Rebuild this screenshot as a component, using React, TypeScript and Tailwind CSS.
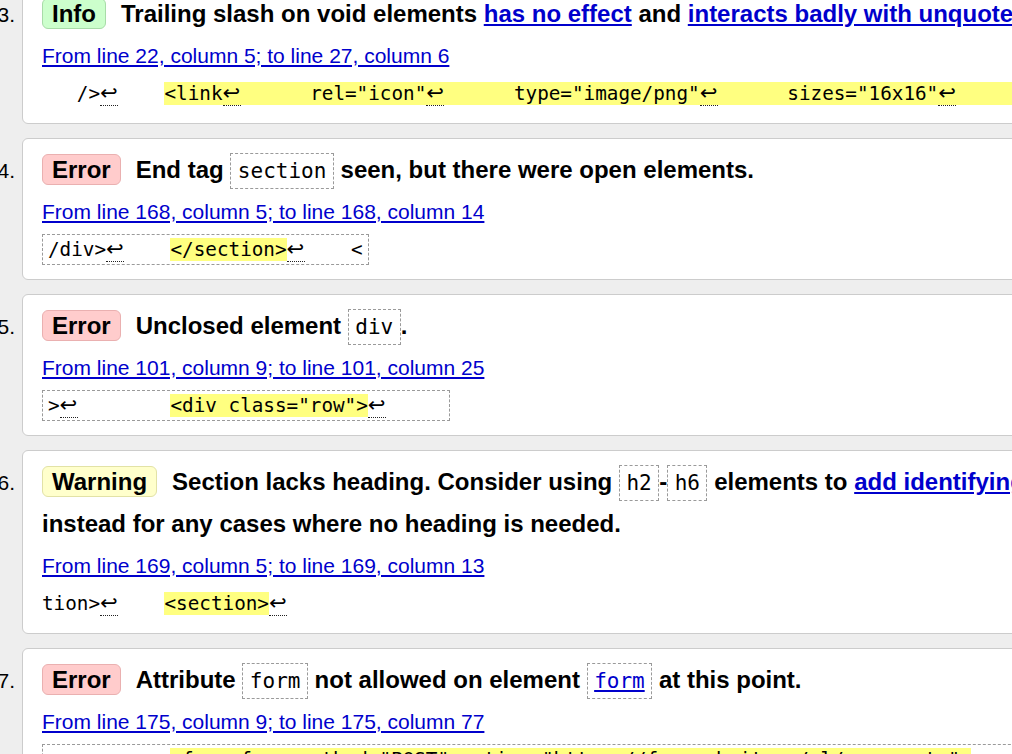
import React from "react";

const LF = () => (
  <span className="inline-block w-[18px] border-b border-dotted border-[#222] pb-[3px] font-['DejaVu_Sans',sans-serif] text-[21px] leading-[18px]">
    ↩
  </span>
);

const Hl = ({ children }: { children: React.ReactNode }) => (
  <span className="bg-[#ffff80]">{children}</span>
);

const C = ({ children }: { children: React.ReactNode }) => (
  <code className="inline-block border border-dashed border-[#9a9a9a] bg-white px-[6.5px] py-[3px] font-['DejaVu_Sans_Mono',monospace] text-[21px] font-normal leading-[28px]">
    {children}
  </code>
);

const A = ({ children }: { children: React.ReactNode }) => (
  <a href="#" className="text-[#0000cc] underline">
    {children}
  </a>
);

type Kind = "info" | "error" | "warning";

const Badge = ({ kind }: { kind: Kind }) => {
  const cls =
    kind === "info"
      ? "bg-[#ccffcc] border-[#a8dca8]"
      : kind === "error"
      ? "bg-[#ffcccc] border-[#eab0b0]"
      : "bg-[#ffffcc] border-[#e2e2a6]";
  const label = kind === "info" ? "Info" : kind === "error" ? "Error" : "Warning";
  return (
    <span className={`mr-[15px] inline-block rounded-[6px] border px-[9px] leading-[29px] ${cls}`}>
      {label}
    </span>
  );
};

const Code = ({ boxed, children }: { boxed: boolean; children: React.ReactNode }) => (
  <div className="mt-[8px] h-[31px]">
    <code
      className={
        boxed
          ? "block h-[31px] w-fit whitespace-pre border border-dashed border-[#9a9a9a] px-[5px] py-[3px] font-['DejaVu_Sans_Mono',monospace] text-[19.3px] leading-[23px] text-black"
          : "block h-[31px] w-fit whitespace-pre border-y border-transparent py-[3px] font-['DejaVu_Sans_Mono',monospace] text-[19.3px] leading-[23px] text-black"
      }
    >
      {children}
    </code>
  </div>
);

const Item = ({
  n,
  kind,
  heading,
  loc,
  code,
}: {
  n: number;
  kind: Kind;
  heading: React.ReactNode;
  loc: string;
  code: React.ReactNode;
}) => (
  <div className="flex items-baseline">
    <span className="w-[40px] shrink-0 pr-[7px] text-right text-[21px] leading-[28px]">{n}.</span>
    <div className="w-[1660px] shrink-0 rounded-[6px] border border-[#cccccc] bg-white px-[19px] pb-[14px] pt-[10px]">
      <p className="text-[24px] font-bold leading-[42px]">
        <Badge kind={kind} />
        {heading}
      </p>
      <p className="mt-[7px] h-[28px] text-[21px] leading-[28px]">
        <A>{loc}</A>
      </p>
      {code}
    </div>
  </div>
);

export default function App() {
  return (
    <div className="h-[754px] w-[1012px] overflow-hidden bg-[#eeeeee] font-['Liberation_Sans',Arial,sans-serif] text-black">
      <div className="-ml-[18px] -mt-[18px] flex flex-col gap-[14px]">
        <Item
          n={3}
          kind="info"
          heading={
            <>
              Trailing slash on void elements <A>has no effect</A> and{" "}
              <A>interacts badly with unquoted attribute values</A>.
            </>
          }
          loc="From line 22, column 5; to line 27, column 6"
          code={
            <Code boxed={false}>
              {"   />"}
              <LF />
              {"    "}
              <Hl>
                {"<link"}
                <LF />
                {'      rel="icon"'}
                <LF />
                {'      type="image/png"'}
                <LF />
                {'      sizes="16x16"'}
                <LF />
                {'      href="/favicon-16x16.png"'}
              </Hl>
            </Code>
          }
        />
        <Item
          n={4}
          kind="error"
          heading={
            <>
              End tag <C>section</C> seen, but there were open elements.
            </>
          }
          loc="From line 168, column 5; to line 168, column 14"
          code={
            <Code boxed>
              {"/div>"}
              <LF />
              {"    "}
              <Hl>{"</section>"}</Hl>
              <LF />
              {"    <"}
            </Code>
          }
        />
        <Item
          n={5}
          kind="error"
          heading={
            <>
              Unclosed element <C>div</C>.
            </>
          }
          loc="From line 101, column 9; to line 101, column 25"
          code={
            <Code boxed>
              {">"}
              <LF />
              {"        "}
              <Hl>{'<div class="row">'}</Hl>
              <LF />
              {"     "}
            </Code>
          }
        />
        <Item
          n={6}
          kind="warning"
          heading={
            <>
              Section lacks heading. Consider using <C>h2</C>-<C>h6</C> elements to{" "}
              <A>add identifying headings to all sections</A>, or else use a <C>div</C> element
              instead for any cases where no heading is needed.
            </>
          }
          loc="From line 169, column 5; to line 169, column 13"
          code={
            <Code boxed={false}>
              {"tion>"}
              <LF />
              {"    "}
              <Hl>{"<section>"}</Hl>
              <LF />
            </Code>
          }
        />
        <Item
          n={7}
          kind="error"
          heading={
            <>
              Attribute <C>form</C> not allowed on element{" "}
              <C>
                <A>form</A>
              </C>{" "}
              at this point.
            </>
          }
          loc="From line 175, column 9; to line 175, column 77"
          code={
            <Code boxed>
              {"  >"}
              <LF />
              {"      "}
              <Hl>{'<form form method="POST" action="https://formsubmit.co/el/xyzqwerty">'}</Hl>
              <LF />
              {"          <input"}
            </Code>
          }
        />
      </div>
    </div>
  );
}
